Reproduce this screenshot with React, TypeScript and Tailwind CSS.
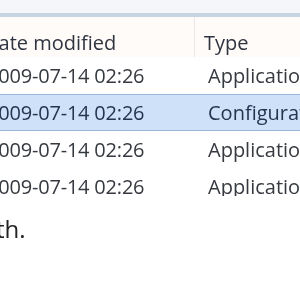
export default function App() {
  const rows = [
    { date: "2009-07-14 02:26", type: "Application", selected: false },
    { date: "2009-07-14 02:26", type: "Configuration", selected: true },
    { date: "2009-07-14 02:26", type: "Application", selected: false },
    { date: "2009-07-14 02:26", type: "Application", selected: false },
  ];

  return (
    <div className="w-[300px] h-[300px] overflow-hidden bg-white font-['Open_Sans',sans-serif] blur-[0.5px]">
      {/* explorer list */}
      <div className="h-[196px] overflow-hidden bg-white">
        <div className="h-[13px] bg-[#f4f6f9]" />
        <div className="h-[4px] bg-[#c9d4e2]" />
        {/* header */}
        <div className="flex h-[40px] bg-[#fffbf9] text-[20px] leading-[28px] text-[#2f3540]">
          <div className="ml-[-18px] w-[213px] shrink-0 border-r border-[#e6e8ec] h-full pt-[12px] pl-[2px]">
            Date modified
          </div>
          <div className="pl-[9px] pt-[12px] whitespace-nowrap">Type</div>
        </div>
        {rows.map((r, i) => (
          <div
            key={i}
            className={
              r.selected
                ? "flex h-[37px] items-center border-y border-[#9ab7dc] bg-[#cfe1f8] text-[20px] text-[#243550] whitespace-nowrap"
                : "flex h-[37px] items-center border-y border-transparent text-[20px] text-[#363a40] whitespace-nowrap"
            }
          >
            <div className="ml-[-15px] w-[210px] shrink-0 pl-[2px] tracking-[-0.2px]">{r.date}</div>
            <div className="pl-[13px]">{r.type}</div>
          </div>
        ))}
      </div>
      <div className="pt-[18px] text-[24px] leading-[30px] text-[#222] whitespace-nowrap ml-[-4px]">
        th.
      </div>
    </div>
  );
}
